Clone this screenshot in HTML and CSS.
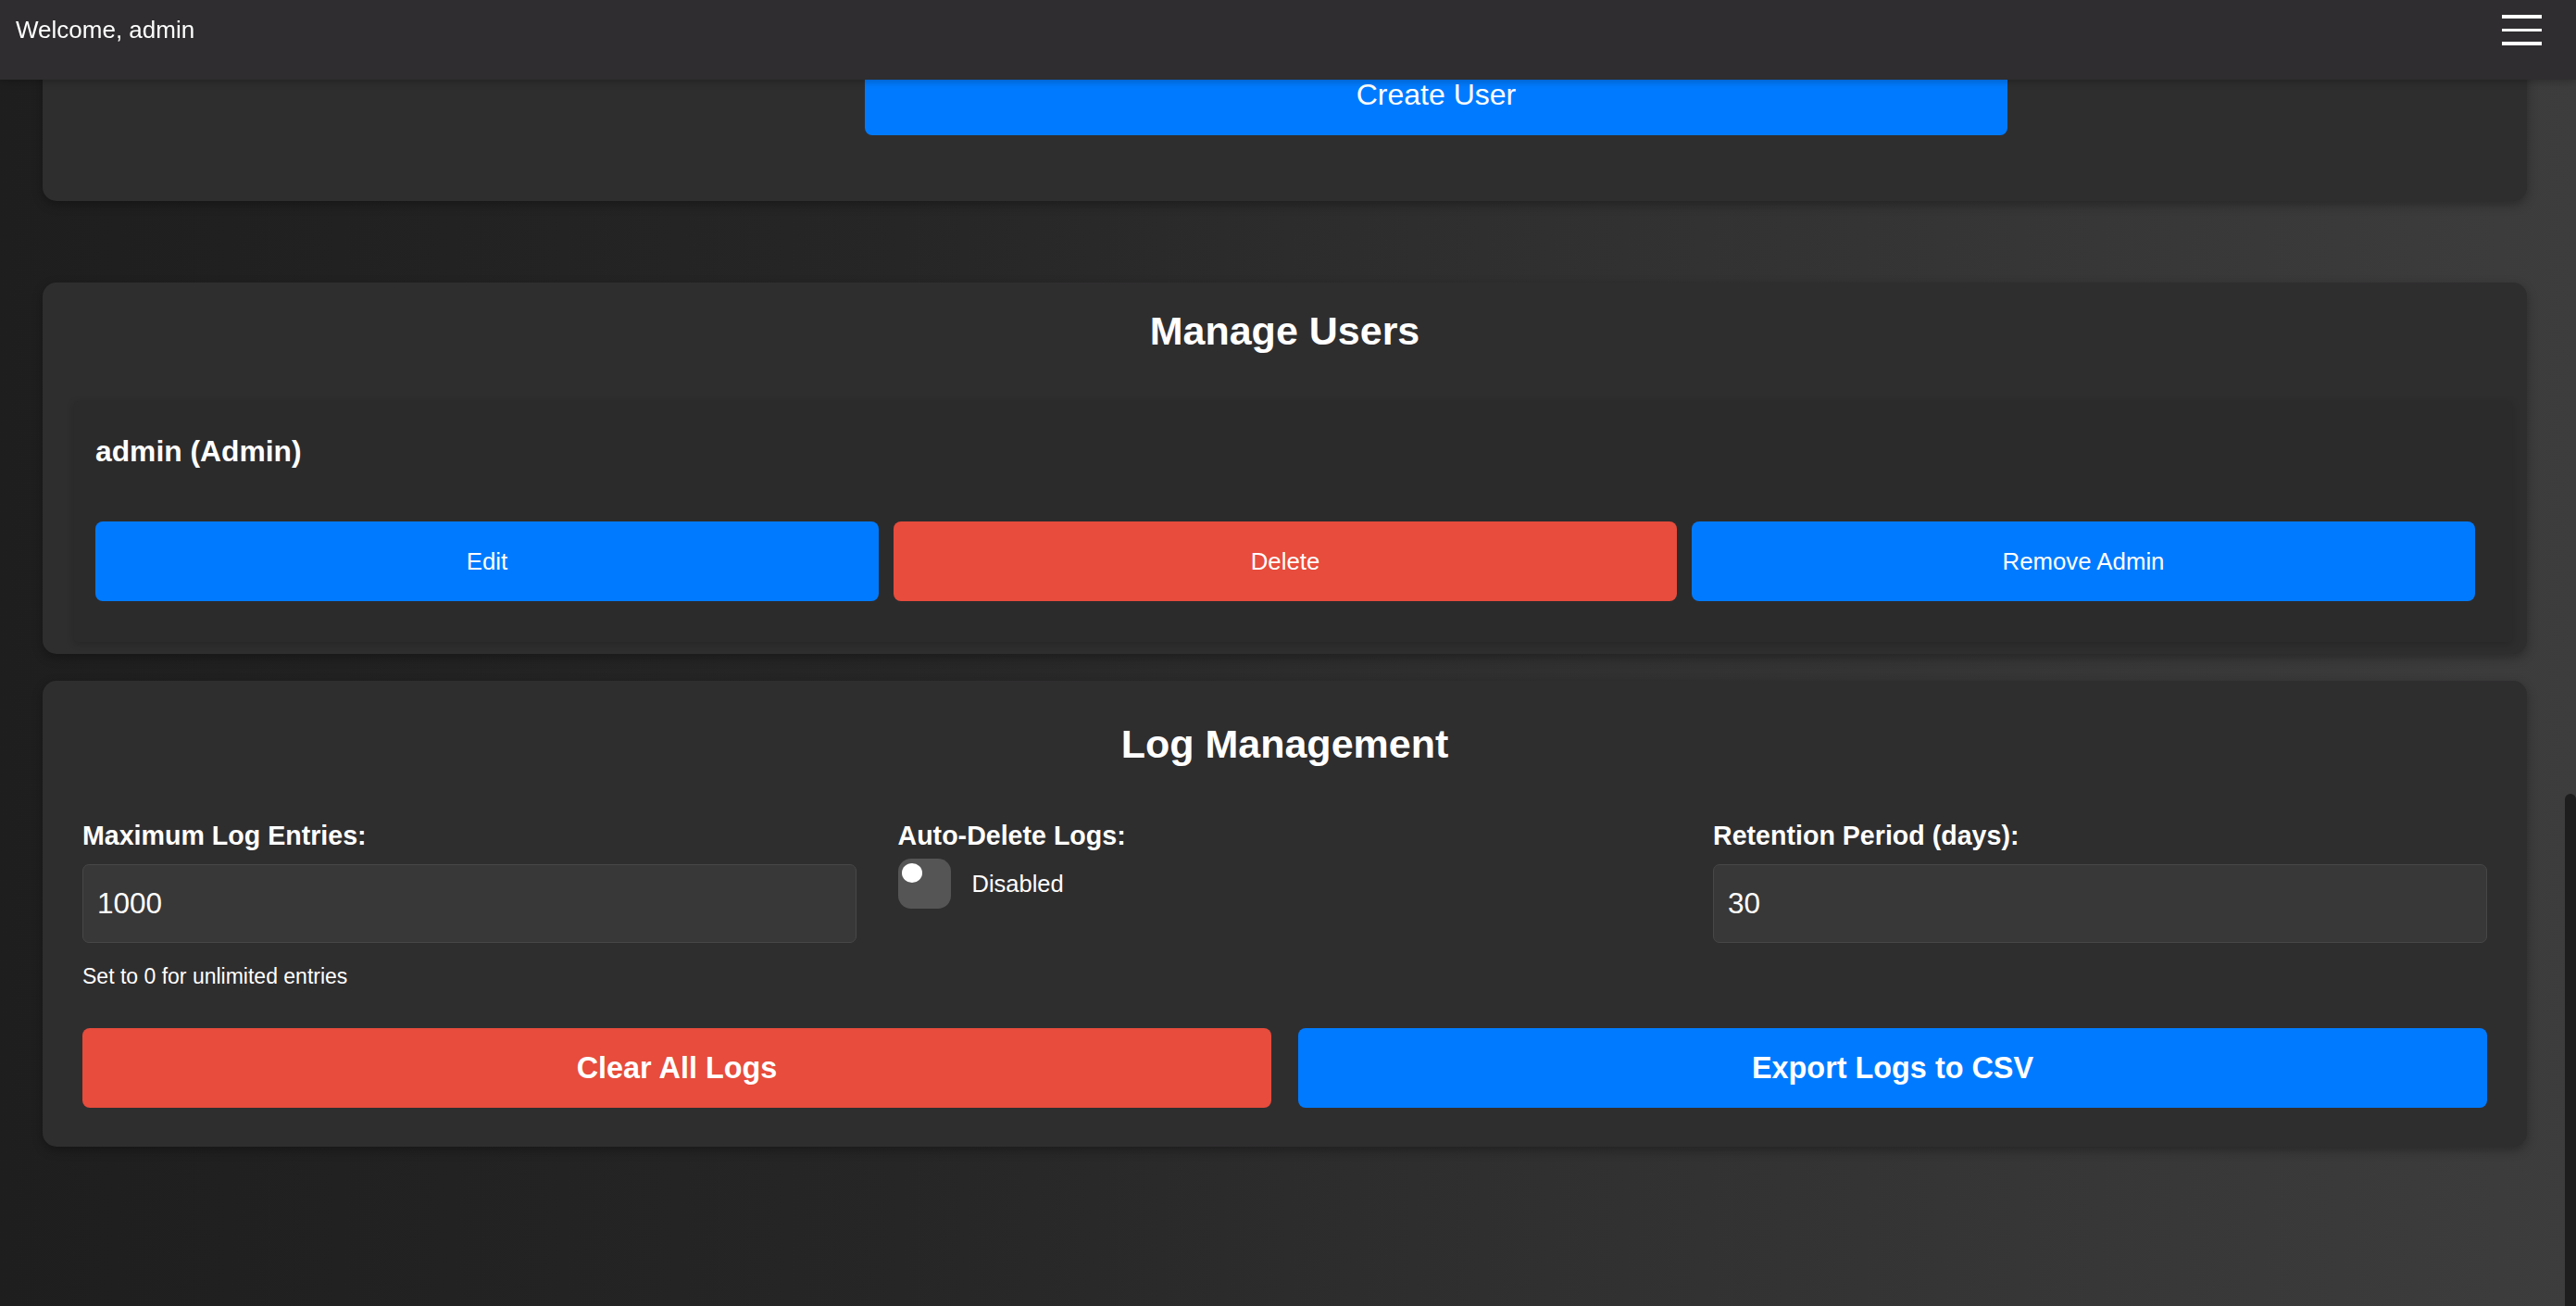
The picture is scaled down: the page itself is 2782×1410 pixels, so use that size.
FILE: index.html
```html
<!DOCTYPE html>
<html lang="en">
<head>
<meta charset="utf-8">
<title>Admin</title>
<link rel="stylesheet" href="styles.css">
</head>
<body>
<header class="topbar">
  <span class="welcome">Welcome, admin</span>
  <button class="menu-toggle" aria-label="Menu"><span></span><span></span><span></span></button>
</header>

<main class="container">
  <section class="card card-create">
    <div class="form-actions">
      <button class="btn btn-primary btn-create">Create User</button>
    </div>
  </section>

  <section class="card card-users">
    <h2 class="card-title">Manage Users</h2>
    <div class="user-item">
      <div class="user-name">admin (Admin)</div>
      <div class="user-actions">
        <button class="btn btn-primary btn-small">Edit</button>
        <button class="btn btn-danger btn-small">Delete</button>
        <button class="btn btn-primary btn-small">Remove Admin</button>
      </div>
    </div>
  </section>

  <section class="card card-logs">
    <h2 class="card-title">Log Management</h2>
    <div class="log-grid">
      <div class="field">
        <label class="field-label">Maximum Log Entries:</label>
        <input class="field-input" type="text" value="1000">
        <div class="hint">Set to 0 for unlimited entries</div>
      </div>
      <div class="field">
        <label class="field-label">Auto-Delete Logs:</label>
        <div class="toggle-row">
          <span class="switch"><span class="knob"></span></span>
          <span class="toggle-text">Disabled</span>
        </div>
      </div>
      <div class="field">
        <label class="field-label">Retention Period (days):</label>
        <input class="field-input" type="text" value="30">
      </div>
    </div>
    <div class="log-actions">
      <button class="btn btn-danger btn-large">Clear All Logs</button>
      <button class="btn btn-primary btn-large">Export Logs to CSV</button>
    </div>
  </section>
</main>

<div class="scroll-thumb"></div>
</body>
</html>
```

FILE: styles.css
```css
* { box-sizing: border-box; }

html, body {
  margin: 0;
  padding: 0;
  height: 100%;
}

body {
  font-family: "Liberation Sans", Arial, Helvetica, sans-serif;
  color: #ffffff;
  background: linear-gradient(to right, #1e1e1e 0%, #262626 35%, #303030 60%, #3d3d3d 100%);
  overflow: hidden;
}

/* Header */
.topbar {
  position: fixed;
  top: 0;
  left: 0;
  right: 0;
  height: 86px;
  z-index: 10;
  display: flex;
  justify-content: space-between;
  align-items: flex-start;
  padding: 0 37px 0 17px;
  background: #2f2d2f;
  box-shadow: 0 2px 8px rgba(0, 0, 0, 0.25);
}

.welcome {
  margin-top: 17px;
  font-size: 26px;
  line-height: 30px;
}

.menu-toggle {
  margin-top: 16px;
  padding: 0;
  border: 0;
  background: transparent;
  display: flex;
  flex-direction: column;
  gap: 11px;
}

.menu-toggle span {
  display: block;
  width: 43px;
  height: 3.5px;
  background: #ffffff;
}

/* Layout */
.container {
  padding: 0 53px 0 46px;
}

.card {
  background: #2f2e2f;
  border-radius: 15px;
  box-shadow: 0 4px 12px rgba(0, 0, 0, 0.3);
}

.card-title {
  margin: 0;
  text-align: center;
  font-size: 43px;
  line-height: 50px;
  font-weight: bold;
}

/* Buttons */
.btn {
  font-family: inherit;
  color: #ffffff;
  border: 0;
  border-radius: 8px;
  display: flex;
  align-items: center;
  justify-content: center;
  padding: 0;
}

.btn-primary { background: #007bff; }
.btn-danger { background: #e74c3c; }

/* Create user card */
.card-create {
  margin-top: -20px;
  padding: 78px 43px 71px 43px;
  margin-bottom: 88px;
}

.btn-create {
  margin-left: 845px;
  width: 1234px;
  height: 88px;
  font-size: 32px;
  align-items: flex-start;
  padding-top: 26px;
}

/* Manage users */
.card-users {
  padding: 27px 16px 13px 16px;
  margin-bottom: 29px;
}

.user-item {
  margin-top: 51px;
  margin-left: 18px;
  padding: 36px 40px 44px 23px;
  background: #2c2b2c;
  box-shadow: 0 2px 8px rgba(0, 0, 0, 0.18);
  border-radius: 4px;
}

.user-name {
  font-size: 31.8px;
  line-height: 36px;
  font-weight: bold;
}

.user-actions {
  margin-top: 58px;
  display: grid;
  grid-template-columns: repeat(3, 1fr);
  gap: 16px;
}

.btn-small {
  height: 86px;
  font-size: 25.8px;
}

/* Log management */
.card-logs {
  padding: 43px 43px 42px 43px;
}

.log-grid {
  margin-top: 57.5px;
  display: grid;
  grid-template-columns: repeat(3, 1fr);
  column-gap: 44.5px;
  align-items: start;
}

.field {
  display: flex;
  flex-direction: column;
}

.field-label {
  font-size: 28.6px;
  line-height: 32px;
  font-weight: bold;
  margin-bottom: 15.5px;
}

.field-input {
  height: 85px;
  width: 100%;
  padding: 0 15px;
  font-family: inherit;
  font-size: 31.5px;
  color: #ffffff;
  background: #383838;
  border: 1px solid #474747;
  border-radius: 7px;
  outline: none;
}

.hint {
  margin-top: 22.5px;
  font-size: 23px;
  line-height: 27px;
}

.toggle-row {
  margin-top: -6px;
  display: flex;
  align-items: center;
}

.switch {
  width: 57px;
  height: 54px;
  border-radius: 14px;
  background: #555555;
  padding: 5px 4px;
  display: block;
}

.knob {
  display: block;
  width: 22px;
  height: 21px;
  border-radius: 50%;
  background: #ffffff;
}

.toggle-text {
  margin-left: 23px;
  font-size: 25.5px;
  line-height: 30px;
}

.log-actions {
  margin-top: 42.5px;
  display: grid;
  grid-template-columns: 1fr 1fr;
  gap: 29px;
}

.btn-large {
  height: 86px;
  font-size: 32.4px;
  font-weight: bold;
}

/* Overlay scrollbar thumb */
.scroll-thumb {
  position: fixed;
  right: 0;
  top: 857px;
  bottom: -10px;
  width: 12px;
  border-radius: 6px;
  background: #1e1e1e;
}
```
